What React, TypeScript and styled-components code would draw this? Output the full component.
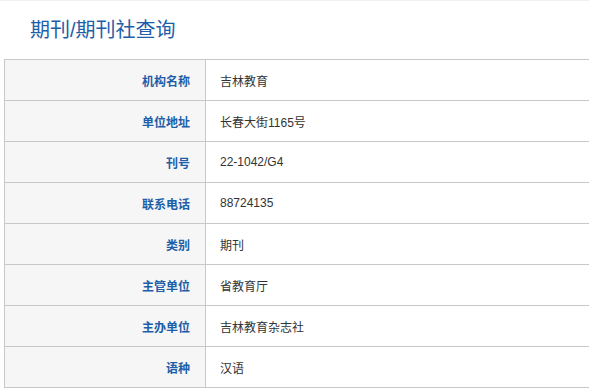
import styled, { createGlobalStyle } from "styled-components";

const GlobalStyle = createGlobalStyle`
  html, body {
    margin: 0;
    padding: 0;
    background: #fff;
    font-family: "Liberation Sans", "Noto Sans CJK SC", sans-serif;
  }
`;

const Page = styled.div`
  width: 589px;
  height: 388px;
  overflow: hidden;
  border-top: 1px solid #f0f0f0;
  box-sizing: border-box;
`;

const Title = styled.h2`
  margin: 0;
  padding: 15px 0 0 30px;
  height: 43px;
  font-size: 20px;
  font-weight: normal;
  line-height: 28px;
  color: #1d5ea8;
`;

const Table = styled.table`
  margin-left: 4px;
  width: 640px;
  border-collapse: collapse;
  font-size: 12px;
`;

const Row = styled.tr`
  height: 41px;
`;

const Label = styled.th`
  width: 185px;
  padding: 0 15px 0 0;
  text-align: right;
  font-weight: bold;
  color: #1d5ea8;
  background: #f6f6f6;
  border: 1px solid #c8c8c8;
`;

const Value = styled.td`
  padding: 0 0 0 14px;
  text-align: left;
  color: #333;
  border: 1px solid #c8c8c8;
`;

const rows: [string, string][] = [
  ["机构名称", "吉林教育"],
  ["单位地址", "长春大街1165号"],
  ["刊号", "22-1042/G4"],
  ["联系电话", "88724135"],
  ["类别", "期刊"],
  ["主管单位", "省教育厅"],
  ["主办单位", "吉林教育杂志社"],
  ["语种", "汉语"],
];

export default function App() {
  return (
    <Page>
      <GlobalStyle />
      <Title>期刊/期刊社查询</Title>
      <Table>
        <tbody>
          {rows.map(([k, v]) => (
            <Row key={k}>
              <Label>{k}</Label>
              <Value>{v}</Value>
            </Row>
          ))}
        </tbody>
      </Table>
    </Page>
  );
}
